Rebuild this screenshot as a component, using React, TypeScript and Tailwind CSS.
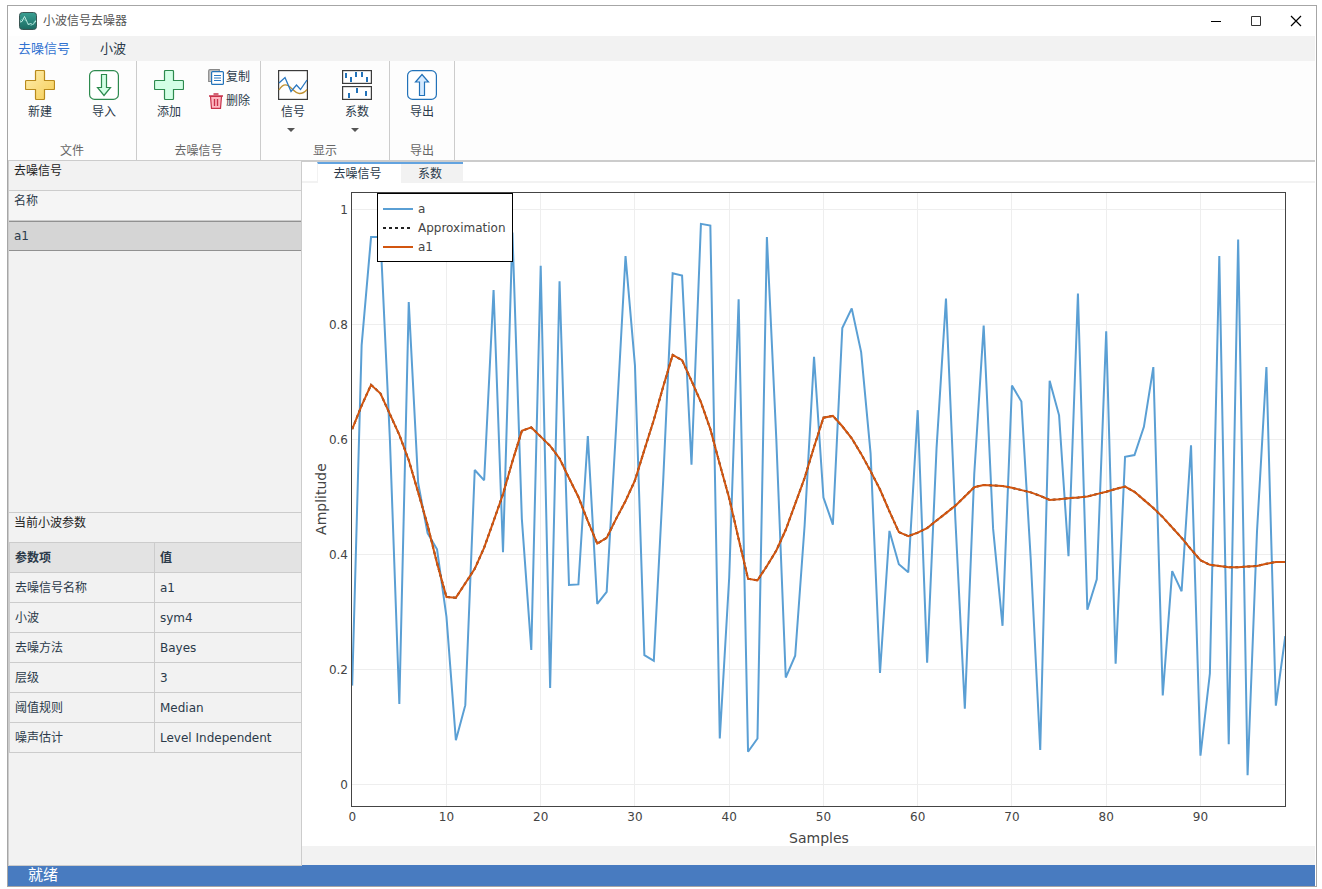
import type { ReactNode } from 'react';

const signal = [
    0.172, 0.764, 0.952, 0.952, 0.6, 0.14, 0.839, 0.524, 0.437, 0.409,
    0.292, 0.077, 0.138, 0.547, 0.529, 0.86, 0.404, 0.96, 0.462, 0.234,
    0.902, 0.168, 0.875, 0.347, 0.348, 0.606, 0.314, 0.335, 0.62, 0.919,
    0.729, 0.225, 0.215, 0.53, 0.889, 0.885, 0.556, 0.975, 0.972, 0.08,
    0.36, 0.844, 0.057, 0.08, 0.952, 0.6, 0.186, 0.224, 0.45, 0.744,
    0.499, 0.452, 0.794, 0.828, 0.752, 0.576, 0.194, 0.441, 0.383, 0.369,
    0.651, 0.212, 0.585, 0.845, 0.46, 0.132, 0.54, 0.798, 0.445, 0.276,
    0.694, 0.666, 0.39, 0.06, 0.702, 0.642, 0.397, 0.854, 0.304, 0.357,
    0.788, 0.21, 0.57, 0.573, 0.622, 0.726, 0.155, 0.371, 0.336, 0.59,
    0.05, 0.193, 0.919, 0.07, 0.948, 0.016, 0.44, 0.726, 0.137, 0.258,
];

const approximation = [
    0.618, 0.659, 0.695, 0.68, 0.644, 0.608, 0.564, 0.508, 0.451, 0.385,
    0.326, 0.325, 0.35, 0.375, 0.412, 0.458, 0.505, 0.562, 0.615, 0.621,
    0.605, 0.589, 0.567, 0.533, 0.5, 0.458, 0.419, 0.429, 0.462, 0.493,
    0.529, 0.582, 0.634, 0.692, 0.747, 0.738, 0.702, 0.665, 0.618, 0.557,
    0.498, 0.427, 0.358, 0.355, 0.38, 0.407, 0.443, 0.488, 0.533, 0.587,
    0.638, 0.641, 0.623, 0.602, 0.575, 0.545, 0.513, 0.475, 0.439, 0.432,
    0.438, 0.446, 0.459, 0.472, 0.485, 0.501, 0.517, 0.521, 0.52, 0.519,
    0.516, 0.512, 0.508, 0.502, 0.495, 0.496, 0.498, 0.499, 0.501, 0.505,
    0.509, 0.514, 0.518, 0.509, 0.495, 0.481, 0.465, 0.447, 0.429, 0.409,
    0.39, 0.382, 0.38, 0.378, 0.378, 0.379, 0.38, 0.384, 0.387, 0.387,
];

const params = [
    ['去噪信号名称', 'a1'],
    ['小波', 'sym4'],
    ['去噪方法', 'Bayes'],
    ['层级', '3'],
    ['阈值规则', 'Median'],
    ['噪声估计', 'Level Independent'],
];

const toX = (i: number) => 50.2 + i * 9.425;
const toY = (v: number) => 601.5 - v * 575;
const toPath = (data: number[]) =>
    data.map((v, i) => `${i ? 'L' : 'M'}${toX(i).toFixed(2)},${toY(v).toFixed(2)}`).join('');

function AppIcon() {
    return (
        <svg className="h-[18px] w-[18px]" viewBox="0 0 18 18">
            <defs>
                <linearGradient id="app" x1="0" y1="0" x2="0" y2="1">
                    <stop offset="0" stopColor="#3aa093" />
                    <stop offset="1" stopColor="#1b6a61" />
                </linearGradient>
            </defs>
            <rect x="0.5" y="0.5" width="17" height="17" rx="3" fill="url(#app)" stroke="#3b5553" />
            <path d="M1 10l2-.5 2.500-5 4 8.500 2-2 2 2L17 9" fill="none" stroke="#c5eee6" />
            <path d="M1 9c2-3 4-2 6 0s4 5 6 4 2-4 4-5" fill="none" stroke="#7cc8bb" strokeWidth="0.8" />
        </svg>
    );
}

function PlusIcon({ id, from, to, stroke }: { id: string; from: string; to: string; stroke: string }) {
    return (
        <svg className="h-[30px] w-[30px]" viewBox="0 0 30 30">
            <defs>
                <linearGradient id={id} x1="0" y1="0" x2="1" y2="1">
                    <stop offset="0" stopColor={from} />
                    <stop offset="1" stopColor={to} />
                </linearGradient>
            </defs>
            <path
                d="M11.500.5h7q1 0 1 1v9h9q1 0 1 1v7q0 1-1 1h-9v9q0 1-1 1h-7q-1 0-1-1v-9h-9q-1 0-1-1v-7q0-1 1-1h9v-9q0-1 1-1z"
                fill={`url(#${id})`}
                stroke={stroke}
                strokeWidth="1.2"
            />
        </svg>
    );
}

function ArrowBoxIcon({ up }: { up?: boolean }) {
    const stroke = up ? '#2272b9' : '#2d8a4e';
    return (
        <svg className="h-[30px] w-[30px]" viewBox="0 0 30 30">
            <rect x="0.600" y="0.600" width="28.800" height="28.800" rx="5" fill="#fff" stroke={stroke} strokeWidth="1.2" />
            <path
                d={up ? 'M15 4.500l6.500 7.500h-4v13.500h-5V12h-4z' : 'M15 25.500l6.500-8h-4v-13h-5v13h-4z'}
                fill={up ? '#d5eaff' : '#d3ffe6'}
                stroke={stroke}
                strokeWidth="1.2"
            />
        </svg>
    );
}

function SignalIcon() {
    return (
        <svg className="h-[30px] w-[30px]" viewBox="0 0 30 30">
            <rect x="0.600" y="0.600" width="28.800" height="28.800" fill="#fff" stroke="#3c3c3c" strokeWidth="1.2" />
            <path d="M1 20C4 15 7 14 10 15.500C14 18 17 23 21.500 23.500C25 23.500 27 22 29 19.500" fill="none" stroke="#bf9030" strokeWidth="1.3" />
            <path d="M1 13l6-5.500 6 14 5.500-6.500 4 4.500L29 10" fill="none" stroke="#2a78c2" strokeWidth="1.3" />
        </svg>
    );
}

function CoefIcon() {
    return (
        <svg className="h-[30px] w-[30px]" viewBox="0 0 30 30">
            <rect x="0.600" y="0.600" width="28.800" height="12.800" fill="#fff" stroke="#3c3c3c" strokeWidth="1.2" />
            <rect x="0.600" y="16.600" width="28.800" height="12.800" fill="#fff" stroke="#3c3c3c" strokeWidth="1.2" />
            <path d="M4 3v5M9 7v5M14 2v5M20 2v5M25 7v5M7 23v5M15 18v5M24 21v5" stroke="#2272b9" strokeWidth="2" />
        </svg>
    );
}

function CopyIcon() {
    return (
        <svg className="h-4 w-4" viewBox="0 0 16 16">
            <path d="M3 12.500H.7V2Q.7.7 2 .7h9.300v2" fill="#ccc" stroke="#888" strokeWidth="1.200" />
            <rect x="3.600" y="2.600" width="11.800" height="12.800" rx="1" fill="#fff" stroke="#2272b9" strokeWidth="1.200" />
            <path d="M6 6.500h7M6 9h7M6 11.500h7" stroke="#2a78c2" />
        </svg>
    );
}

function TrashIcon() {
    return (
        <svg className="h-4 w-4" viewBox="0 0 16 16">
            <path d="M2.500 3.500h11l-1 11.800h-9z" fill="#ffb8c2" stroke="#c8324a" strokeWidth="1.200" />
            <path d="M1 3h14M5.500 1h5M6.500 6v7M9.500 6v7" fill="none" stroke="#c8324a" strokeWidth="1.400" />
        </svg>
    );
}

function RibbonButton({ label, menu, children }: { label: string; menu?: boolean; children: ReactNode }) {
    return (
        <button className="flex w-16 flex-col items-center">
            {children}
            <span className="mt-1 leading-4">{label}</span>
            {menu && (
                <svg className="mt-2 mr-1 h-1 w-2" viewBox="0 0 8 4">
                    <path d="M0 0h8l-4 4z" fill="#555" />
                </svg>
            )}
        </button>
    );
}

function RibbonGroup({ title, children }: { title: string; children: ReactNode }) {
    return (
        <section className="flex flex-col justify-between border-r border-[#ccc] pt-[9px]">
            <div className="flex">{children}</div>
            <h2 className="h-[17px] text-center leading-4 text-[#666]">{title}</h2>
        </section>
    );
}

function Chart() {
    return (
        <svg className="block h-full w-full" viewBox="0 0 1013 663" fontSize="12" fill="#444" role="img" aria-label="去噪信号">
            <defs>
                <clipPath id="plot">
                    <rect x="50" y="10" width="933" height="613" />
                </clipPath>
            </defs>
            <g stroke="#eee">
                {[10, 20, 30, 40, 50, 60, 70, 80, 90].map((x) => (
                    <line key={x} x1={Math.floor(toX(x)) + 0.5} x2={Math.floor(toX(x)) + 0.5} y1="10" y2="623" />
                ))}
                {[0, 0.2, 0.4, 0.6, 0.8, 1].map((y) => (
                    <line key={y} x1="50" x2="983" y1={toY(y)} y2={toY(y)} />
                ))}
            </g>
            <g clipPath="url(#plot)" fill="none" strokeWidth="2" strokeMiterlimit="2">
                <path d={toPath(signal)} stroke="#5a9fd4" />
                <path d={toPath(approximation)} stroke="#222" strokeDasharray="3,3" />
                <path d={toPath(approximation)} stroke="#d2550f" />
            </g>
            <rect x="49.500" y="9.500" width="934" height="614" fill="none" stroke="#444" />
            {[0, 10, 20, 30, 40, 50, 60, 70, 80, 90].map((x) => (
                <text key={x} x={toX(x)} y="638" textAnchor="middle">{x}</text>
            ))}
            {[0, 0.2, 0.4, 0.6, 0.8, 1].map((y) => (
                <text key={y} x="46" y={toY(y) + 4} textAnchor="end">{y}</text>
            ))}
            <text x="517" y="660" fontSize="14" textAnchor="middle">Samples</text>
            <text transform="translate(24 316) rotate(-90)" fontSize="14" textAnchor="middle">Amplitude</text>
            <rect x="75.500" y="10.500" width="135" height="68" fill="#fff" stroke="#000" />
            <g strokeWidth="2">
                <path d="M81 26h30" stroke="#5a9fd4" />
                <path d="M81 45h30" stroke="#222" strokeDasharray="3,3" />
                <path d="M81 64h30" stroke="#d2550f" />
            </g>
            <text x="116" y="30">a</text>
            <text x="116" y="49">Approximation</text>
            <text x="116" y="68">a1</text>
        </svg>
    );
}

export default function App() {
    return (
        <div className="h-screen bg-white pt-[5px] pr-[5px] pb-0.5 pl-[7px] font-['DejaVu_Sans','Noto_Sans_CJK_SC',sans-serif] text-xs text-[#2b3a4a]">
            <div className="flex h-full flex-col border border-[#a6a6a6] pr-px">
                <header className="-mr-px flex h-[30px] shrink-0 items-center justify-between">
                    <div className="flex items-center gap-1.5 pl-[11px]">
                        <AppIcon />
                        <h1 className="text-[#555]">小波信号去噪器</h1>
                    </div>
                    <div className="flex text-black">
                        <button aria-label="最小化" className="flex h-[30px] w-10 items-center justify-center">
                            <svg className="h-3 w-3" viewBox="0 0 12 12"><path d="M1 6.500h10" stroke="currentColor" /></svg>
                        </button>
                        <button aria-label="最大化" className="flex h-[30px] w-10 items-center justify-center">
                            <svg className="h-3 w-3" viewBox="0 0 12 12"><path d="M1.500 1.500h9v9h-9z" fill="none" stroke="#333" /></svg>
                        </button>
                        <button aria-label="关闭" className="flex h-[30px] w-10 items-center justify-center">
                            <svg className="h-3 w-3" viewBox="0 0 12 12"><path d="M1 1l10 10M11 1L1 11" stroke="currentColor" strokeWidth="1.200" /></svg>
                        </button>
                    </div>
                </header>

                <nav className="flex h-[25px] shrink-0 bg-[#f2f2f2] text-[13px]">
                    <button className="w-[72px] bg-[#fdfdfd] text-[#3273d1]">去噪信号</button>
                    <button className="px-5">小波</button>
                </nav>

                <div className="flex h-[100px] shrink-0 border-b border-[#ccc] bg-[#fdfdfd]">
                    <RibbonGroup title="文件">
                        <RibbonButton label="新建">
                            <PlusIcon id="gold" from="#ffeeb0" to="#f5cd55" stroke="#b98a1c" />
                        </RibbonButton>
                        <RibbonButton label="导入"><ArrowBoxIcon /></RibbonButton>
                    </RibbonGroup>
                    <RibbonGroup title="去噪信号">
                        <RibbonButton label="添加">
                            <PlusIcon id="green" from="#d3ffe6" to="#d3ffe6" stroke="#2d8a4e" />
                        </RibbonButton>
                        <div className="-mt-px flex flex-col gap-2 pr-2.5 pl-[7px]">
                            <button className="flex h-4 items-center gap-0.5"><CopyIcon />复制</button>
                            <button className="flex h-4 items-center gap-0.5"><TrashIcon />删除</button>
                        </div>
                    </RibbonGroup>
                    <RibbonGroup title="显示">
                        <RibbonButton label="信号" menu><SignalIcon /></RibbonButton>
                        <RibbonButton label="系数" menu><CoefIcon /></RibbonButton>
                    </RibbonGroup>
                    <RibbonGroup title="导出">
                        <RibbonButton label="导出"><ArrowBoxIcon up /></RibbonButton>
                    </RibbonGroup>
                </div>

                <div className="flex min-h-0 flex-1">
                    <aside className="z-10 -mb-px flex w-[294px] shrink-0 flex-col border-x border-[#ccc] bg-[#f2f2f2]">
                        <section className="flex-1">
                            <h2 className="h-[30px] border-b border-[#ccc] px-[5px] pt-0.5 leading-4 text-[#222]">去噪信号</h2>
                            <table className="w-full border-separate border-spacing-0 text-left">
                                <thead>
                                    <tr>
                                        <th className="h-[30px] border-b border-[#ccc] bg-[#f5f5f5] px-[5px] pt-0.5 align-top leading-4 font-normal">名称</th>
                                    </tr>
                                </thead>
                                <tbody>
                                    <tr>
                                        <td className="h-[30px] border-y border-[#919191] bg-[#d5d5d5] px-[5px]">a1</td>
                                    </tr>
                                </tbody>
                            </table>
                        </section>
                        <section className="h-[354px] shrink-0 border-y border-[#ccc]">
                            <h2 className="h-[29px] px-[5px] pt-0.5 leading-4 text-[#222]">当前小波参数</h2>
                            <table className="w-full table-fixed border-separate border-spacing-0 border-t border-l border-[#ccc] text-left">
                                <thead>
                                    <tr className="bg-[#e3e3e3]">
                                        <th className="h-[30px] w-[145px] border-r border-b border-[#ccc] px-[5px]">参数项</th>
                                        <th className="h-[30px] border-b border-[#ccc] px-[5px]">值</th>
                                    </tr>
                                </thead>
                                <tbody>
                                    {params.map(([name, value]) => (
                                        <tr key={name}>
                                            <td className="h-[30px] border-r border-b border-[#ccc] px-[5px]">{name}</td>
                                            <td className="h-[30px] border-b border-[#ccc] px-[5px]">{value}</td>
                                        </tr>
                                    ))}
                                </tbody>
                            </table>
                        </section>
                    </aside>

                    <main className="flex min-w-0 flex-1 flex-col border-t border-[#ccc]">
                        <div className="flex h-[21px] shrink-0">
                            <div className="w-[15px] border-b-2 border-[#f2f2f2]" />
                            <button className="w-[84px] border-t-2 border-l border-t-[#62a3e0] border-l-[#f2f2f2] pr-1">去噪信号</button>
                            <button className="w-[62px] border-t-2 border-[#62a3e0] bg-[#f2f2f2] pr-1">系数</button>
                            <div className="flex-1 border-b-2 border-[#f2f2f2]" />
                        </div>
                        <div className="min-h-0 flex-1">
                            <Chart />
                        </div>
                        <div className="h-[19px] shrink-0 bg-[#f2f2f2]" />
                    </main>
                </div>

                <footer className="flex h-[21px] shrink-0 items-center bg-[#487bc0] pl-5 text-[15px] text-white">就绪</footer>
            </div>
        </div>
    );
}
